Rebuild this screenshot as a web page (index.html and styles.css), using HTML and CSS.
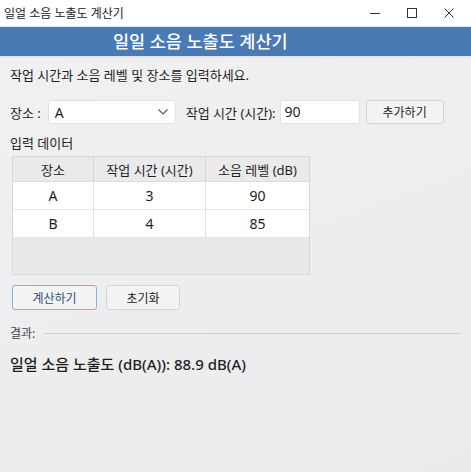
FILE: index.html
```html
<!DOCTYPE html>
<html lang="ko">
<head>
    <meta charset="UTF-8">
    <meta name="viewport" content="width=device-width, initial-scale=1.0">
    <title>일얼 소음 노출도 계산기</title>
    <link rel="stylesheet" href="styles.css">
</head>
<body>
    <div class="window">
        <div class="titlebar">
            <span class="title">일얼 소음 노출도 계산기</span>
            <div class="controls">
                <span class="ctrl">
                    <svg width="12" height="12" viewBox="0 0 12 12"><path d="M1 6.5h10" stroke="#333" stroke-width="1"/></svg>
                </span>
                <span class="ctrl">
                    <svg width="12" height="12" viewBox="0 0 12 12"><rect x="1.5" y="1.5" width="9" height="9" fill="none" stroke="#333" stroke-width="1"/></svg>
                </span>
                <span class="ctrl">
                    <svg width="12" height="12" viewBox="0 0 12 12"><path d="M1.5 1.5l9 9M10.5 1.5l-9 9" stroke="#333" stroke-width="1"/></svg>
                </span>
            </div>
        </div>

        <div class="header">일일 소음 노출도 계산기</div>

        <div class="content">
            <p class="intro">작업 시간과 소음 레벨 및 장소를 입력하세요.</p>

            <div class="form-row">
                <label class="label">장소 :</label>
                <div class="combo">
                    <span>A</span>
                    <svg width="12" height="8" viewBox="0 0 12 8"><path d="M1.5 1.5l4.5 4.5 4.5-4.5" fill="none" stroke="#555" stroke-width="1.1"/></svg>
                </div>
                <label class="label hours-label">작업 시간 (시간):</label>
                <div class="input">90</div>
                <button class="btn add">추가하기</button>
            </div>

            <div class="section-title">입력 데이터</div>

            <div class="table-box">
                <table class="data">
                    <thead>
                        <tr>
                            <th class="col-place">장소</th>
                            <th class="col-hours">작업 시간 (시간)</th>
                            <th class="col-level">소음 레벨 (dB)</th>
                        </tr>
                    </thead>
                    <tbody>
                        <tr><td>A</td><td>3</td><td>90</td></tr>
                        <tr><td>B</td><td>4</td><td>85</td></tr>
                    </tbody>
                </table>
            </div>

            <div class="actions">
                <button class="btn primary">계산하기</button>
                <button class="btn reset">초기화</button>
            </div>

            <div class="result-head">
                <span>결과:</span>
                <div class="rule"></div>
            </div>

            <div class="result">일얼 소음 노출도 (dB(A)): 88.9 dB(A)</div>
        </div>
    </div>
</body>
</html>
```

FILE: styles.css
```css
body {
    margin: 0;
    width: 471px;
    height: 472px;
    overflow: hidden;
    font-family: "Noto Sans", "Noto Sans CJK KR", sans-serif;
    color: #1e1e1e;
    background: linear-gradient(160deg, #f1f1f2 0%, #ebebed 100%);
}

.window {
    height: 472px;
}

.titlebar {
    height: 26px;
    background-color: #fff;
    display: flex;
    align-items: center;
    justify-content: space-between;
    border-bottom: 1px solid #e4e8ee;
}

.title {
    padding-left: 4px;
    font-size: 12px;
    color: #222;
}

.controls {
    display: flex;
    padding-right: 4px;
}

.ctrl {
    width: 37px;
    height: 26px;
    display: flex;
    align-items: center;
    justify-content: center;
}

.header {
    height: 29px;
    background-color: #4a7ab3;
    color: #fff;
    font-size: 17.5px;
    font-weight: 500;
    line-height: 29px;
    padding-left: 113px;
    border-bottom: 2px solid #dfe6ef;
}

.content {
    padding: 0 10px;
}

.intro {
    margin: 8px 0 0;
    font-size: 13px;
    line-height: 18px;
}

.form-row {
    display: flex;
    align-items: center;
    margin-top: 16px;
    height: 24px;
}

.label {
    font-size: 13px;
}

.combo {
    height: 22px;
    margin-left: 7px;
    background-color: #fff;
    border: 1px solid #e2e2e2;
    border-radius: 3px;
    display: flex;
    align-items: center;
    justify-content: space-between;
    padding: 0 6px;
    width: 114px;
    font-size: 14px;
}

.hours-label {
    margin-left: 10px;
}

.input {
    width: 74px;
    height: 22px;
    margin-left: 4px;
    background-color: #fff;
    border: 1px solid #e2e2e2;
    border-radius: 2px;
    padding-left: 4px;
    font-size: 14px;
    line-height: 22px;
}

.btn {
    font-family: inherit;
    font-size: 12px;
    color: #222;
    background-color: #f3f3f3;
    border: 1px solid #d4d4d4;
    border-radius: 3px;
    height: 24px;
    padding: 0;
    cursor: pointer;
}

.add {
    width: 78px;
    margin-left: 6px;
}

.section-title {
    margin-top: 10px;
    font-size: 13px;
    line-height: 18px;
}

.table-box {
    margin: 4px 0 0 2px;
    width: 296px;
    height: 117px;
    border: 1px solid #d8d8d8;
    background-color: #e9e9ea;
}

.data {
    border-collapse: collapse;
    width: 100%;
    font-size: 13px;
}

.data th {
    font-weight: normal;
    height: 24px;
    background-color: #eaeaeb;
    border-right: 1px solid #d6d6d6;
    border-bottom: 1px solid #dcdcdc;
    padding: 0;
}

.data td {
    height: 27px;
    background-color: #fff;
    text-align: center;
    border-right: 1px solid #e2e2e2;
    border-bottom: 1px solid #e6e6e6;
    padding: 0;
    font-size: 14px;
}

.col-place {
    width: 80px;
}

.col-hours {
    width: 111px;
}

.data th:last-child,
.data td:last-child {
    border-right: none;
}

.actions {
    display: flex;
    gap: 9px;
    margin: 10px 0 0 2px;
}

.primary {
    width: 85px;
    height: 25px;
    border-color: #8aaee0;
    color: #2c4d80;
}

.reset {
    width: 74px;
    height: 25px;
}

.result-head {
    display: flex;
    align-items: center;
    margin-top: 14px;
    font-size: 12px;
    color: #444;
}

.rule {
    flex: 1;
    height: 1px;
    background-color: #cfcfd2;
    margin-left: 9px;
}

.result {
    margin-top: 11px;
    font-size: 15px;
    font-weight: 500;
}
```
